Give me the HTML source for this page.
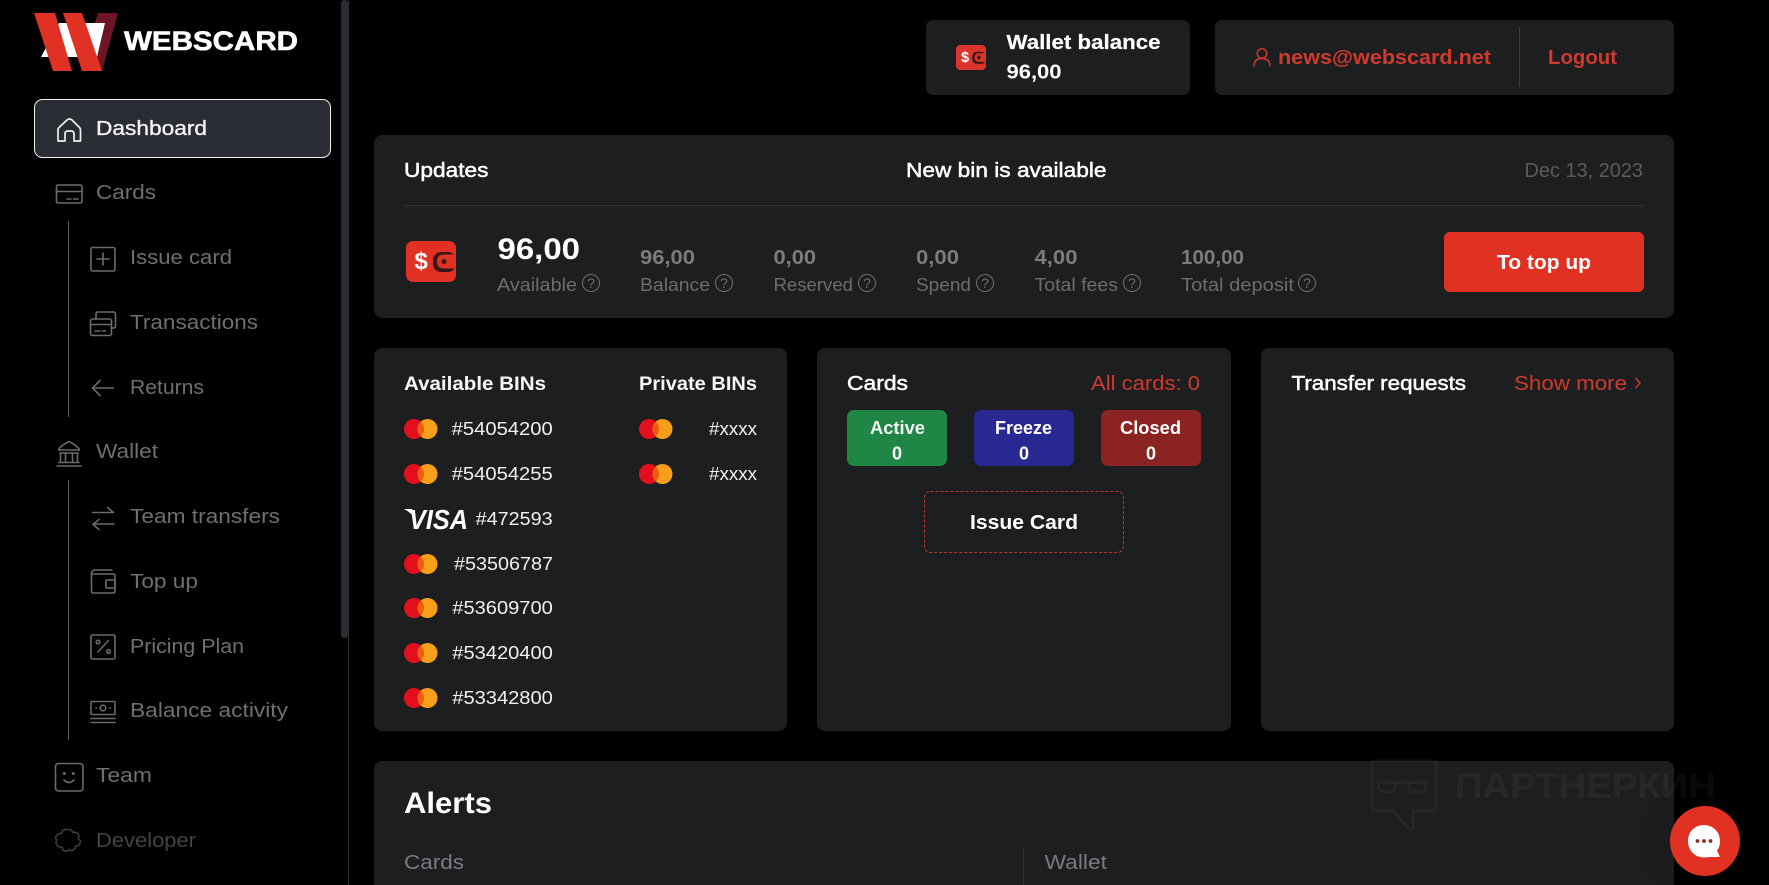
<!DOCTYPE html>
<html lang="en"><head><meta charset="utf-8"><title>Webscard Dashboard</title>
<style>
html,body{margin:0;padding:0;background:#000;width:1769px;height:885px;overflow:hidden}
svg{display:block}
text{font-family:"Liberation Sans","DejaVu Sans",sans-serif;font-size:20px;fill:#fff}
.b{font-weight:700}
.m{stroke:currentColor;stroke-width:.5px}
.nav{fill:#6e6f71;font-size:20.5px}
.lab{fill:#6c6c6c;font-size:18.5px}
.val{fill:#7b7b7b;font-weight:700;font-size:20.5px}
.red{fill:#cf3a2e}
.ic{fill:none;stroke:#6a6a6a;stroke-width:1.6;stroke-linecap:round;stroke-linejoin:round}
.q{fill:none;stroke:#6e6e6e;stroke-width:1}
.qt{fill:#6e6e6e;font-size:14px;text-anchor:middle}
.bin{font-size:18.5px;fill:#f0f0f0}
</style></head><body>
<svg width="1769" height="885" viewBox="0 0 1769 885" xmlns="http://www.w3.org/2000/svg">
<rect width="1769" height="885" fill="#000"/>

<!-- sidebar scrollbar -->
<rect x="348" y="0" width="1" height="885" fill="#2e3034"/>
<rect x="341" y="0" width="7" height="638" rx="3" fill="#2b2d31"/>

<!-- logo -->
<polygon points="98,13 118,13 102,71 84,56" fill="#6d1526"/>
<polygon points="59,23 105,23 97,57 41,57" fill="#fff"/>
<polygon points="34,13 55,13 72,71 53,71" fill="#e03124"/>
<polygon points="63,13 82,13 102,71 82,71" fill="#e03124"/>
<text x="124" y="50" class="b" font-size="27" style="font-size:27px;stroke:#fff;stroke-width:.6px" textLength="174" lengthAdjust="spacingAndGlyphs">WEBSCARD</text>

<!-- active nav item -->
<rect x="34.5" y="99.5" width="296" height="58" rx="8" fill="#2a2d33" stroke="#f0f0f0" stroke-width="1"/>
<path d="M58 130Q58 128.500 59 127.500L67 120Q69.500 118 72 120L79.500 127.500Q80.500 128.500 80.500 130V141H74V134Q74 131 71 131H68Q65 131 65 134V141H58Z" fill="none" stroke="#f0f0f0" stroke-width="1.7" stroke-linejoin="round"/>
<text x="96" y="135" class="m" style="color:#f4f4f4;fill:#f4f4f4;font-size:20.5px;stroke-width:.35px" textLength="111" lengthAdjust="spacingAndGlyphs">Dashboard</text>

<!-- nav lines -->
<rect x="68" y="221" width="1" height="196" fill="#5c5c5c"/>
<rect x="68" y="480" width="1" height="260" fill="#5c5c5c"/>

<!-- nav items -->
<text x="96" y="199" class="nav" textLength="60" lengthAdjust="spacingAndGlyphs">Cards</text>
<text x="130" y="264" class="nav" textLength="102" lengthAdjust="spacingAndGlyphs">Issue card</text>
<text x="130" y="329" class="nav" textLength="128" lengthAdjust="spacingAndGlyphs">Transactions</text>
<text x="130" y="394" class="nav" textLength="74" lengthAdjust="spacingAndGlyphs">Returns</text>
<text x="96" y="458" class="nav" textLength="62" lengthAdjust="spacingAndGlyphs">Wallet</text>
<text x="130" y="523" class="nav" textLength="150" lengthAdjust="spacingAndGlyphs">Team transfers</text>
<text x="130" y="588" class="nav" textLength="68" lengthAdjust="spacingAndGlyphs">Top up</text>
<text x="130" y="653" class="nav" textLength="114" lengthAdjust="spacingAndGlyphs">Pricing Plan</text>
<text x="130" y="717" class="nav" textLength="158" lengthAdjust="spacingAndGlyphs">Balance activity</text>
<text x="96" y="782" class="nav" textLength="56" lengthAdjust="spacingAndGlyphs">Team</text>
<text x="96" y="847" class="nav" style="fill:#434445" textLength="100" lengthAdjust="spacingAndGlyphs">Developer</text>

<!-- nav icons -->
<g class="ic">
<rect x="56.500" y="185" width="25.500" height="18" rx="1.500"/><path d="M56.500 191.500H82M67 199h4M73.500 199h4.500"/>
<rect x="91" y="247.500" width="24" height="23.500" rx="1.500"/><path d="M103 253v12M97 259h12"/>
<rect x="90.500" y="319" width="21" height="16.500" rx="2"/><path d="M96 319v-5q0-2 2-2h15.500q2 0 2 2v12q0 2-2 2h-2M90.500 324.500h21M95 331h5M102.500 331h3"/>
<path d="M92.500 388H113.500M100 380.500l-7.500 7.500 7.500 7.500"/>
<path d="M58.500 450Q60 446 69 441.500Q78 446 79.500 450ZM60 453h18M60.500 453v9M65.500 453v9M72.500 453v9M77.500 453v9M59 462.500h20M57 466h24"/>
<path d="M92.500 512.500H113.500M107.500 507.500l6 5M114 524H93M99 519.500l-6 5 6 5"/>
<path d="M94 570H112M91.500 573.500q0-3 2.500-3M91.500 573.500V591q0 2 2 2H113q2 0 2-2V576q0-2-2-2H92"/><rect x="106" y="580" width="9" height="8" rx="1"/>
<rect x="91" y="635" width="24" height="24" rx="1.500"/><path d="M98 652l10.500-11.500"/><circle cx="98" cy="642" r="1.800"/><circle cx="108.500" cy="651.500" r="1.800"/>
<rect x="91" y="701.500" width="24" height="13" rx="1"/><circle cx="103" cy="708" r="2.800"/><path d="M96 708h.5M110 708h.5M91 718.500h24M91 722.500h24"/>
<rect x="55.500" y="763.500" width="27.500" height="27.500" rx="3"/><path d="M64 780q5 5 10 0"/>
</g>
<circle cx="64.300" cy="773.500" r="1.500" fill="#6a6a6a"/><circle cx="73.300" cy="773.500" r="1.500" fill="#6a6a6a"/>
<path d="M69 829.500q3 0 4 3 3-1 5 1.500t0 4.500q3 2 2.500 3.500t-2.500 4q-2 0-2.500 0 0 3-2.500 4t-4-.5q-1.500 2-4 1.500t-3-4q-3 .5-5-2t0-5q-2.500-2-.5-4.500t5-2q.5-4 4.500-4Z" fill="none" stroke="#3f3f3f" stroke-width="1.500" stroke-linejoin="round"/>

<!-- header boxes -->
<rect x="926" y="20" width="264" height="75" rx="7" fill="#1d1e20"/>
<rect x="1215" y="20" width="459" height="75" rx="7" fill="#1d1e20"/>
<g transform="translate(956 45) scale(.6 .61)">
<rect width="50" height="41" rx="7" fill="#d9352a"/>
<rect x="27" y="11" width="23" height="20" rx="8" fill="#3a1715"/>
<path d="M50 13.500H38q-7 0-7 7t7 7h12Z" fill="#d9352a"/><circle cx="38" cy="20.500" r="3" fill="#3a1715"/>
<text x="8.500" y="28" class="b" style="font-size:24px">$</text>
</g>
<text x="1006.500" y="49" class="b" style="font-size:20.500px;stroke:#fff;stroke-width:.2px" textLength="154" lengthAdjust="spacingAndGlyphs">Wallet balance</text>
<text x="1006.500" y="78.500" class="b" style="font-size:20.500px" textLength="55" lengthAdjust="spacingAndGlyphs">96,00</text>
<g fill="none" stroke="#cf3a2e" stroke-width="1.500"><circle cx="1262" cy="53.500" r="4.800"/><path d="M1254 66.500q0-8 8-8t8 8"/></g>
<text x="1278" y="64" class="b red" textLength="213" lengthAdjust="spacingAndGlyphs">news@webscard.net</text>
<rect x="1519" y="27" width="1" height="60" fill="#3a3b3d"/>
<text x="1548" y="64" class="b red" textLength="69" lengthAdjust="spacingAndGlyphs">Logout</text>

<!-- updates card -->
<rect x="374" y="135" width="1300" height="183" rx="8" fill="#1d1e20"/>
<text x="404" y="177" class="m" style="color:#fff;font-size:20.500px" textLength="84.500" lengthAdjust="spacingAndGlyphs">Updates</text>
<text x="906" y="177" class="m" style="color:#fff;font-size:20.500px" textLength="200.500" lengthAdjust="spacingAndGlyphs">New bin is available</text>
<text x="1524.500" y="177" style="fill:#5a5b5d;font-size:20px" textLength="118.500" lengthAdjust="spacingAndGlyphs">Dec 13, 2023</text>
<rect x="404" y="205" width="1240" height="1" fill="#2f3032"/>

<g transform="translate(406 241)">
<rect width="50" height="41" rx="7" fill="#e03124"/>
<rect x="27" y="11" width="23" height="20" rx="8" fill="#3a1715"/>
<path d="M50 13.500H38q-7 0-7 7t7 7h12Z" fill="#e03124"/><circle cx="38" cy="20.500" r="2.500" fill="#3a1715"/>
<text x="8.500" y="28" class="b" style="font-size:24px">$</text>
</g>
<text x="497.500" y="259" class="b" style="font-size:30px" textLength="82.500" lengthAdjust="spacingAndGlyphs">96,00</text>
<text x="497" y="291" class="lab" textLength="80" lengthAdjust="spacingAndGlyphs">Available</text>
<circle class="q" cx="591" cy="283" r="8.500"/><text class="qt" x="591" y="288">?</text>

<text x="640" y="264" class="val" textLength="55" lengthAdjust="spacingAndGlyphs">96,00</text>
<text x="640" y="291" class="lab" textLength="70" lengthAdjust="spacingAndGlyphs">Balance</text>
<circle class="q" cx="724" cy="283" r="8.500"/><text class="qt" x="724" y="288">?</text>

<text x="773.500" y="264" class="val" textLength="42.500" lengthAdjust="spacingAndGlyphs">0,00</text>
<text x="773.500" y="291" class="lab" textLength="79.500" lengthAdjust="spacingAndGlyphs">Reserved</text>
<circle class="q" cx="867" cy="283" r="8.500"/><text class="qt" x="867" y="288">?</text>

<text x="916" y="264" class="val" textLength="43" lengthAdjust="spacingAndGlyphs">0,00</text>
<text x="916" y="291" class="lab" textLength="55" lengthAdjust="spacingAndGlyphs">Spend</text>
<circle class="q" cx="985" cy="283" r="8.500"/><text class="qt" x="985" y="288">?</text>

<text x="1034.500" y="264" class="val" textLength="43" lengthAdjust="spacingAndGlyphs">4,00</text>
<text x="1034.500" y="291" class="lab" textLength="83.500" lengthAdjust="spacingAndGlyphs">Total fees</text>
<circle class="q" cx="1132" cy="283" r="8.500"/><text class="qt" x="1132" y="288">?</text>

<text x="1181" y="264" class="val" textLength="63" lengthAdjust="spacingAndGlyphs">100,00</text>
<text x="1181" y="291" class="lab" textLength="113" lengthAdjust="spacingAndGlyphs">Total deposit</text>
<circle class="q" cx="1307" cy="283" r="8.500"/><text class="qt" x="1307" y="288">?</text>

<rect x="1444" y="232" width="200" height="60" rx="6" fill="#e03122"/>
<text x="1497" y="269" class="b" textLength="94" lengthAdjust="spacingAndGlyphs">To top up</text>

<!-- BIN card -->
<rect x="374" y="348" width="413" height="383" rx="8" fill="#1d1e20"/>
<text x="404" y="390" class="b" style="font-size:19.500px;fill:#f6f6f6" textLength="142" lengthAdjust="spacingAndGlyphs">Available BINs</text>
<text x="639" y="390" class="b" style="font-size:19.500px;fill:#f6f6f6" textLength="118" lengthAdjust="spacingAndGlyphs">Private BINs</text>
<defs><g id="mc"><circle cx="10" cy="0" r="10" fill="#e30f1d"/><circle cx="23.500" cy="0" r="10" fill="#f79e1b"/><path d="M16.700-7.400a10 10 0 0 1 0 14.800a10 10 0 0 1 0-14.800Z" fill="#ee5a0e"/></g></defs>
<use href="#mc" x="404" y="429"/><text x="451.700" y="435" class="bin" textLength="101" lengthAdjust="spacingAndGlyphs">#54054200</text>
<use href="#mc" x="404" y="474"/><text x="451.700" y="480" class="bin" textLength="101" lengthAdjust="spacingAndGlyphs">#54054255</text>
<path d="M404 509H412L415.500 519Q411 512.500 404 509Z" fill="#fff"/>
<text x="409" y="529" style="font-size:28px;font-weight:700;font-style:italic" textLength="59" lengthAdjust="spacingAndGlyphs">VISA</text>
<text x="475.700" y="525" class="bin" textLength="77" lengthAdjust="spacingAndGlyphs">#472593</text>
<use href="#mc" x="404" y="564"/><text x="454" y="570" class="bin" textLength="99" lengthAdjust="spacingAndGlyphs">#53506787</text>
<use href="#mc" x="404" y="608"/><text x="452.300" y="614" class="bin" textLength="100.500" lengthAdjust="spacingAndGlyphs">#53609700</text>
<use href="#mc" x="404" y="653"/><text x="452.300" y="659" class="bin" textLength="100.500" lengthAdjust="spacingAndGlyphs">#53420400</text>
<use href="#mc" x="404" y="698"/><text x="452.300" y="704" class="bin" textLength="100.500" lengthAdjust="spacingAndGlyphs">#53342800</text>
<use href="#mc" x="639" y="429"/><text x="709" y="435" class="bin" textLength="48" lengthAdjust="spacingAndGlyphs">#xxxx</text>
<use href="#mc" x="639" y="474"/><text x="709" y="480" class="bin" textLength="48" lengthAdjust="spacingAndGlyphs">#xxxx</text>

<!-- cards card -->
<rect x="817" y="348" width="414" height="383" rx="8" fill="#1d1e20"/>
<text x="847" y="390" class="m" style="color:#fff;font-size:20px" textLength="61" lengthAdjust="spacingAndGlyphs">Cards</text>
<text x="1091" y="390" class="red" style="font-size:20px" textLength="109" lengthAdjust="spacingAndGlyphs">All cards: 0</text>
<rect x="847" y="410" width="100" height="56" rx="7" fill="#1f8645"/>
<rect x="974" y="410" width="100" height="56" rx="7" fill="#292892"/>
<rect x="1101" y="410" width="100" height="56" rx="7" fill="#8b2323"/>
<text x="870" y="434" class="b" style="font-size:18px;fill:#f0f6f0" textLength="55" lengthAdjust="spacingAndGlyphs">Active</text>
<text x="995" y="434" class="b" style="font-size:18px" textLength="57" lengthAdjust="spacingAndGlyphs">Freeze</text>
<text x="1120" y="434" class="b" style="font-size:18px" textLength="61" lengthAdjust="spacingAndGlyphs">Closed</text>
<text x="897" y="459.500" class="b" style="font-size:18px;text-anchor:middle">0</text>
<text x="1024" y="459.500" class="b" style="font-size:18px;text-anchor:middle">0</text>
<text x="1151" y="459.500" class="b" style="font-size:18px;text-anchor:middle">0</text>
<rect x="924.500" y="491.500" width="199" height="61" rx="6" fill="none" stroke="#b8382e" stroke-width="1" stroke-dasharray="3 2"/>
<text x="970" y="529" class="b" textLength="108" lengthAdjust="spacingAndGlyphs">Issue Card</text>

<!-- transfer card -->
<rect x="1261" y="348" width="413" height="383" rx="8" fill="#1d1e20"/>
<text x="1291.500" y="390" class="m" style="color:#fff;font-size:20px" textLength="174.500" lengthAdjust="spacingAndGlyphs">Transfer requests</text>
<text x="1514" y="390" class="red" style="font-size:20px" textLength="113" lengthAdjust="spacingAndGlyphs">Show more</text>
<path d="M1635.500 378l4.500 5-4.500 5" fill="none" stroke="#cf3a2e" stroke-width="1.500"/>

<!-- alerts card -->
<rect x="374" y="761" width="1300" height="140" rx="8" fill="#1d1e20"/>
<circle cx="1705" cy="841" r="65" fill="#000" opacity=".05"/>
<rect x="1674" y="761" width="60" height="124" fill="#000"/>
<text x="404" y="813" class="b" style="font-size:30px" textLength="88" lengthAdjust="spacingAndGlyphs">Alerts</text>
<text x="404" y="869" style="fill:#787b80;font-size:20px" textLength="60" lengthAdjust="spacingAndGlyphs">Cards</text>
<rect x="1023" y="847" width="1" height="38" fill="#333436"/>
<text x="1044.500" y="869" style="fill:#787b80;font-size:20px" textLength="62.500" lengthAdjust="spacingAndGlyphs">Wallet</text>

<!-- watermark -->
<g opacity=".04">
<path d="M1372 760.500h61q3.500 0 3.500 3.500v43.500q0 3.500-3.500 3.500h-20v16q0 3.500-3.500 2.500l-16-18.500h-18q-3.500 0-3.500-3.500V764q0-3.500 3.500-3.500Z" fill="none" stroke="#fff" stroke-width="2.500"/>
<path d="M1378 782.500h48M1378.500 782.500v3q0 6.500 6.500 6.500h5q5 0 5-6.500v-3M1408.500 782.500v3q0 6.500 6.500 6.500h5q5.500 0 5.500-6.500v-3" fill="none" stroke="#fff" stroke-width="2.500"/>
<text x="1455" y="798" class="b" style="font-size:35px" textLength="261" lengthAdjust="spacingAndGlyphs">ПАРТНЕРКИН</text>
</g>

<!-- chat -->
<circle cx="1705" cy="841" r="35" fill="#e03122"/>
<path d="M1704 825c9 0 16 7 16 16 0 4-1 7-3 9.500l3 6.500h-11q-2.500.5-5 .5c-9 0-16-7-16-16.500s7-16 16-16Z" fill="#fff"/>
<circle cx="1697.500" cy="841" r="1.900" fill="#8a2a22"/><circle cx="1704" cy="841" r="1.900" fill="#8a2a22"/><circle cx="1710.500" cy="841" r="1.900" fill="#8a2a22"/>
</svg>
</body></html>
